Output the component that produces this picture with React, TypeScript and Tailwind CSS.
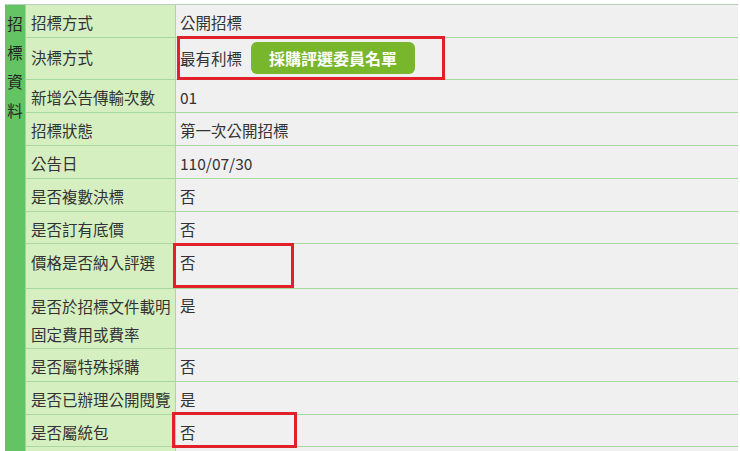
import React from "react";

type Row = {
  label: React.ReactNode;
  value: React.ReactNode;
  h: string;
  pt: string;
};

const rows: Row[] = [
  { label: "招標方式", value: "公開招標", h: "h-[32px]", pt: "pt-[4px]" },
  {
    label: "決標方式",
    value: (
      <div className="flex items-center gap-[9px]">
        <span>最有利標</span>
        <span className="inline-flex h-[32px] w-[164px] items-center justify-center rounded-[6px] bg-[#78b62c] text-[16px] font-bold text-white">
          採購評選委員名單
        </span>
      </div>
    ),
    h: "h-[42px]",
    pt: "pt-[6px]",
  },
  { label: "新增公告傳輸次數", value: "01", h: "h-[33px]", pt: "pt-[4px]" },
  { label: "招標狀態", value: "第一次公開招標", h: "h-[33px]", pt: "pt-[4px]" },
  { label: "公告日", value: "110/07/30", h: "h-[33px]", pt: "pt-[4px]" },
  { label: "是否複數決標", value: "否", h: "h-[33px]", pt: "pt-[4px]" },
  { label: "是否訂有底價", value: "否", h: "h-[32px]", pt: "pt-[4px]" },
  { label: "價格是否納入評選", value: "否", h: "h-[45px]", pt: "pt-[5px]" },
  {
    label: (
      <>
        是否於招標文件載明
        <br />
        固定費用或費率
      </>
    ),
    value: "是",
    h: "h-[60px]",
    pt: "pt-[3px]",
  },
  { label: "是否屬特殊採購", value: "否", h: "h-[33px]", pt: "pt-[4px]" },
  { label: "是否已辦理公開閱覽", value: "是", h: "h-[33px]", pt: "pt-[4px]" },
  { label: "是否屬統包", value: "否", h: "h-[32px]", pt: "pt-[4px]" },
  { label: "", value: "", h: "h-[20px]", pt: "pt-[4px]" },
];

export default function App() {
  return (
    <div
      className="relative h-[451px] w-[740px] overflow-hidden bg-white text-[15.5px] text-[#333]"
      style={{ fontFamily: '"Noto Sans CJK TC", "Noto Sans", sans-serif' }}
    >
      <div className="pl-[5px] pt-[4px]">
        <div className="flex w-[733px] border-t border-[#b9cfbd]">
          <div className="w-[20px] shrink-0 bg-[#63c463] pt-[4px] text-center leading-[29px] text-[#222]">
            招<br />標<br />資<br />料
          </div>
          <div className="flex flex-1 flex-col border-l border-[#9fd49a]">
            {rows.map((r, i) => (
              <div
                key={i}
                className={`flex shrink-0 ${i === 0 ? "" : "border-t border-[#a6d8a0]"} ${r.h}`}
              >
                <div
                  className={`w-[150px] shrink-0 border-r border-[#a6d8a0] bg-[#d5efc1] pl-[5px] ${
                    i === 8 ? "leading-[28px]" : "leading-[26px]"
                  } ${r.pt} whitespace-nowrap`}
                >
                  {r.label}
                </div>
                <div
                  className={`flex-1 bg-[#eff0ef] pl-[4px] ${
                    i === 1 ? "pt-[4px] leading-[26px]" : `leading-[26px] ${r.pt}`
                  }`}
                >
                  {r.value}
                </div>
              </div>
            ))}
          </div>
        </div>
      </div>

      <div className="pointer-events-none absolute left-[177px] top-[36px] h-[44px] w-[268px] border-[3px] border-[#e2202a]" />
      <div className="pointer-events-none absolute left-[173px] top-[243px] h-[45px] w-[121px] border-[3px] border-[#e2202a]" />
      <div className="pointer-events-none absolute left-[172px] top-[412px] h-[36px] w-[125px] border-[3px] border-[#e2202a]" />
    </div>
  );
}
